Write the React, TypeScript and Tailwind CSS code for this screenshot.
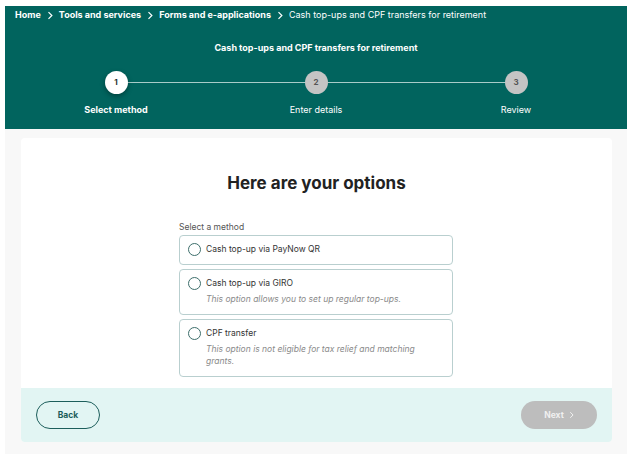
import React from 'react';

const steps = [
    { n: 1, label: 'Select method', active: true },
    { n: 2, label: 'Enter details', active: false },
    { n: 3, label: 'Review', active: false },
];

const options = [
    { title: 'Cash top-up via PayNow QR', note: '' },
    { title: 'Cash top-up via GIRO', note: 'This option allows you to set up regular top-ups.' },
    { title: 'CPF transfer', note: 'This option is not eligible for tax relief and matching grants.' },
];

const Chevron: React.FC<{ className?: string }> = ({ className }) => (
    <svg viewBox="0 0 8 12" className={className} fill="none" stroke="currentColor" strokeWidth="1.6">
        <path d="M2 1.5 6.5 6 2 10.5" />
    </svg>
);

export default function App() {
    return (
        <div className="min-h-[459px] bg-white px-[5px] pt-[6px] font-['Inter',sans-serif]">
            {/* Header band */}
            <div className="w-[622px] h-[123px] bg-[#01645e] text-white">
                <div className="flex items-center h-[18px] pl-[10px] text-[9px] gap-[6px]">
                    <span className="font-bold">Home</span>
                    <Chevron className="w-[6px] h-[9px]" />
                    <span className="font-bold">Tools and services</span>
                    <Chevron className="w-[6px] h-[9px]" />
                    <span className="font-bold">Forms and e-applications</span>
                    <Chevron className="w-[6px] h-[9px]" />
                    <span>Cash top-ups and CPF transfers for retirement</span>
                </div>
                <p className="text-center text-[9px] font-bold mt-[17px]">
                    Cash top-ups and CPF transfers for retirement
                </p>

                {/* Stepper */}
                <div className="relative mt-[16px] mx-auto w-[600px]">
                    <div className="absolute left-[100px] right-[100px] top-[11px] h-px bg-[#a9ccc9]" />
                    <div className="relative grid grid-cols-3">
                        {steps.map((s) => (
                            <div key={s.n} className="flex flex-col items-center">
                                <div
                                    className={`w-[23px] h-[23px] rounded-full flex items-center justify-center text-[8px] font-bold ${
                                        s.active
                                            ? 'bg-white text-[#1f2d2c] shadow-[0_2px_5px_rgba(0,0,0,0.35)]'
                                            : 'bg-[#c4c4c4] text-[#555]'
                                    }`}
                                >
                                    {s.n}
                                </div>
                                <span className={`mt-[9px] text-[9px] ${s.active ? 'font-bold' : ''}`}>{s.label}</span>
                            </div>
                        ))}
                    </div>
                </div>
            </div>

            {/* Body */}
            <div className="w-[622px] bg-[#f8f8f8] pl-[16px] pr-[15px] pt-[9px] pb-[12px]">
                <div className="rounded-[4px] bg-white overflow-hidden">
                    <div className="pt-[33px] pb-[11px]">
                        <h1 className="text-center text-[17px] font-bold text-[#222]">Here are your options</h1>
                        <div className="mt-[24px] w-[274px] ml-[158px]">
                            <p className="text-[8.5px] text-[#555] mb-[2px]">Select a method</p>
                            <div className="flex flex-col gap-[4px]">
                                {options.map((o) => (
                                    <div
                                        key={o.title}
                                        className="flex gap-[5px] border border-[#b9cfcf] rounded-[4px] pl-[8px] pr-[16px] pt-[7px] pb-[8px]"
                                    >
                                        <div className="w-[13px] h-[13px] rounded-full border border-[#3d6e6b] shrink-0" />
                                        <div className="flex flex-col">
                                            <span className="text-[8.5px] leading-[13px] text-[#333]">{o.title}</span>
                                            {o.note && (
                                                <span className="text-[8.5px] leading-[12px] italic text-[#8a8a8a] mt-[3px] mb-[1px]">{o.note}</span>
                                            )}
                                        </div>
                                    </div>
                                ))}
                            </div>
                        </div>
                    </div>

                    {/* Footer */}
                    <div className="bg-[#e2f5f3] h-[54px] flex items-center justify-between px-[15px]">
                        <button className="w-[64px] h-[28px] rounded-full border border-[#1c5e5b] text-[8.5px] font-bold text-[#1c5e5b]">
                            Back
                        </button>
                        <button className="w-[76px] h-[28px] rounded-full bg-[#bdbdbd] text-[8.5px] font-bold text-[#f0f0f0] flex items-center justify-center gap-[5px]">
                            Next
                            <Chevron className="w-[5px] h-[8px]" />
                        </button>
                    </div>
                </div>
            </div>
        </div>
    );
}
